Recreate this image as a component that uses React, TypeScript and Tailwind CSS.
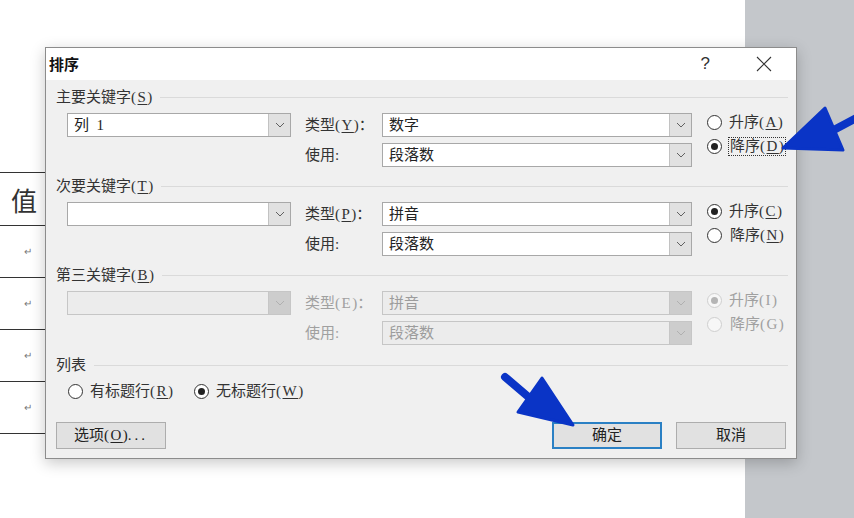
import React from "react";

const FONT = { fontFamily: '"Liberation Serif", "Noto Sans CJK SC", serif' };

function Chevron({ disabled }: { disabled?: boolean }) {
  return (
    <svg width="10" height="6" viewBox="0 0 10 6">
      <path d="M1 1 L5 5 L9 1" fill="none" stroke={disabled ? "#b0b0b0" : "#606060"} strokeWidth="1" />
    </svg>
  );
}

function Combo({ w, value, disabled }: { w: string; value?: string; disabled?: boolean }) {
  return (
    <div
      className={`flex h-[24px] ${w} border ${
        disabled ? "border-[#c6c6c6] bg-[#ececec] text-[#9c9c9c]" : "border-[#a8a8a8] bg-white text-[#222]"
      }`}
    >
      <div className="flex flex-1 items-center whitespace-pre pl-[6px] text-[15px] leading-none">{value}</div>
      <div
        className={`flex w-[22px] items-center justify-center border-l ${
          disabled ? "border-[#c6c6c6] bg-[#cdcdcd]" : "border-[#c2c2c2] bg-[#e1e1e1]"
        }`}
      >
        <Chevron disabled={disabled} />
      </div>
    </div>
  );
}

function Radio({ checked, disabled }: { checked?: boolean; disabled?: boolean }) {
  return (
    <div
      className={`flex h-[15px] w-[15px] shrink-0 items-center justify-center rounded-full border ${
        disabled ? "border-[#cfcfcf] bg-[#f7f7f7]" : "border-[#333] bg-white"
      }`}
    >
      {checked && (
        <div className={`h-[7px] w-[7px] rounded-full ${disabled ? "bg-[#b5b5b5]" : "bg-[#222]"}`} />
      )}
    </div>
  );
}

/* parenthesised accelerator, spaced like the half-width latin of the original font */
function P({ k, u = true }: { k: string; u?: boolean }) {
  return (
    <span>
      <span className="tracking-[1.5px]">
        ({u ? <span className="underline underline-offset-[2px]">{k}</span> : k}
      </span>
      )
    </span>
  );
}

function GroupHeader({ children }: { children: React.ReactNode }) {
  return (
    <div className="flex h-[16px] items-center">
      <span className="whitespace-nowrap text-[15px] leading-none text-[#333]">{children}</span>
      <div className="ml-[8px] h-px flex-1 bg-[#dadada]" />
    </div>
  );
}

function KeyGroup({
  header,
  keyValue,
  typeLabel,
  typeValue,
  asc,
  desc,
  descChecked,
  focusDesc,
  disabled,
}: {
  header: React.ReactNode;
  keyValue?: string;
  typeLabel: React.ReactNode;
  typeValue: string;
  asc: React.ReactNode;
  desc: React.ReactNode;
  descChecked?: boolean;
  focusDesc?: boolean;
  disabled?: boolean;
}) {
  const lbl = disabled ? "text-[#a0a0a0]" : "text-[#333]";
  return (
    <div>
      <GroupHeader>{header}</GroupHeader>
      <div className="mt-[8px] flex items-start pl-[11px]">
        <Combo w="w-[224px]" value={keyValue} disabled={disabled} />
        <div className="ml-[14px] flex flex-col gap-[6px]">
          <div className="flex items-center">
            <span className={`w-[77px] whitespace-nowrap text-[15px] leading-none ${lbl}`}>{typeLabel}</span>
            <Combo w="w-[310px]" value={typeValue} disabled={disabled} />
          </div>
          <div className="flex items-center">
            <span className={`w-[77px] whitespace-nowrap text-[15px] leading-none ${lbl}`}>使用:</span>
            <Combo w="w-[310px]" value="段落数" disabled={disabled} />
          </div>
        </div>
        <div className="ml-[15px] flex flex-col gap-[6px]">
          <div className="flex h-[18px] items-center">
            <Radio checked={!descChecked} disabled={disabled} />
            <span className={`ml-[7px] whitespace-nowrap text-[15px] leading-none ${lbl}`}>{asc}</span>
          </div>
          <div className="flex h-[18px] items-center">
            <Radio checked={descChecked} disabled={disabled} />
            <span
              className={`ml-[6px] whitespace-nowrap px-px py-[1px] text-[15px] leading-none ${lbl} ${
                focusDesc ? "border border-dotted border-[#333]" : "border border-transparent"
              }`}
            >
              {desc}
            </span>
          </div>
        </div>
      </div>
    </div>
  );
}

function Btn({ children, primary }: { children: React.ReactNode; primary?: boolean }) {
  return (
    <div
      className={`flex h-[27px] w-[110px] items-center justify-center whitespace-nowrap bg-[#e1e1e1] text-[15px] leading-none text-[#222] ${
        primary ? "border-2 border-[#2a80c4]" : "border border-[#adadad]"
      }`}
    >
      {children}
    </div>
  );
}

export default function App() {
  return (
    <div className="relative h-[518px] w-[854px] overflow-hidden" style={FONT}>
      <div className="flex h-full">
        {/* document page */}
        <div className="w-[745px] bg-white pt-[172px]">
          <div className="w-[220px]">
            <div
              className="flex h-[53px] items-center border-t border-[#333] pl-[11px] text-[26px] text-[#333]"
              style={{ fontFamily: '"Noto Sans CJK SC", sans-serif' }}
            >
              值
            </div>
            {[0, 1, 2, 3].map((i) => (
              <div
                key={i}
                className="flex h-[52px] items-center border-t border-[#333] pl-[24px] text-[10px] text-[#777]"
              >
                ↵
              </div>
            ))}
            <div className="border-t border-[#333]" />
          </div>
        </div>
        <div className="flex-1 bg-[#c4c7cb]" />
      </div>

      {/* dialog */}
      <div className="absolute left-[45px] top-[47px] w-[752px] border border-[#8c8c8c] bg-[#f0f0f0] shadow-[0_4px_14px_rgba(0,0,0,0.22)]">
        <div className="flex h-[32px] items-center bg-white pl-[3px]">
          <span
            className="text-[15px] font-bold text-[#111]"
            style={{ fontFamily: '"Noto Sans CJK SC", sans-serif' }}
          >
            排序
          </span>
          <div className="flex-1" />
          <span
            className="mr-[46px] text-[17px] text-[#333]"
            style={{ fontFamily: '"Liberation Sans", sans-serif' }}
          >
            ?
          </span>
          <svg width="16" height="16" viewBox="0 0 16 16" className="mr-[24px]">
            <path d="M1 1 L15 15 M15 1 L1 15" stroke="#333" strokeWidth="1.1" />
          </svg>
        </div>

        <div className="flex flex-col pb-[9px] pl-[10px] pr-[8px] pt-[9px]">
          <KeyGroup
            header={
              <>
                主要关键字<P k="S" />
              </>
            }
            keyValue="列  1"
            typeLabel={
              <>
                类型<P k="Y" />：
              </>
            }
            typeValue="数字"
            asc={
              <>
                升序<P k="A" />
              </>
            }
            desc={
              <>
                降序<P k="D" />
              </>
            }
            descChecked
            focusDesc
          />
          <div className="mt-[11px]">
            <KeyGroup
              header={
                <>
                  次要关键字<P k="T" />
                </>
              }
              typeLabel={
                <>
                  类型<P k="P" />：
                </>
              }
              typeValue="拼音"
              asc={
                <>
                  升序<P k="C" />
                </>
              }
              desc={
                <>
                  降序<P k="N" />
                </>
              }
            />
          </div>
          <div className="mt-[11px]">
            <KeyGroup
              header={
                <>
                  第三关键字<P k="B" />
                </>
              }
              typeLabel={
                <>
                  类型<P k="E" u={false} />：
                </>
              }
              typeValue="拼音"
              asc={
                <>
                  升序<P k="I" u={false} />
                </>
              }
              desc={
                <>
                  降序<P k="G" u={false} />
                </>
              }
              disabled
            />
          </div>

          <div className="mt-[12px]">
            <GroupHeader>列表</GroupHeader>
          </div>
          <div className="mt-[9px] flex h-[18px] items-center whitespace-nowrap pl-[12px] text-[15px] leading-none text-[#333]">
            <div className="flex w-[126px] items-center">
              <Radio />
              <span className="ml-[7px]">
                有标题行<P k="R" />
              </span>
            </div>
            <div className="flex items-center">
              <Radio checked />
              <span className="ml-[7px]">
                无标题行<P k="W" />
              </span>
            </div>
          </div>

          <div className="mr-[2px] mt-[22px] flex items-center">
            <Btn>
              选项<P k="O" />
              <span className="tracking-[3px]">...</span>
            </Btn>
            <div className="flex-1" />
            <Btn primary>确定</Btn>
            <div className="ml-[14px]">
              <Btn>取消</Btn>
            </div>
          </div>
        </div>
      </div>

      {/* annotation arrows */}
      <svg className="pointer-events-none absolute left-0 top-0" width="854" height="518" viewBox="0 0 854 518">
        <g fill="#0a34c6" stroke="#0a34c6" strokeLinejoin="round" strokeLinecap="round">
          <path d="M860 116 L830 132" strokeWidth="8" fill="none" />
          <path d="M783 148 L825 108 L843 150 Z" strokeWidth="3" />
          <path d="M505 377 L532 400" strokeWidth="8" fill="none" />
          <path d="M573 425 L542 378 L518 412 Z" strokeWidth="3" />
        </g>
      </svg>
    </div>
  );
}
